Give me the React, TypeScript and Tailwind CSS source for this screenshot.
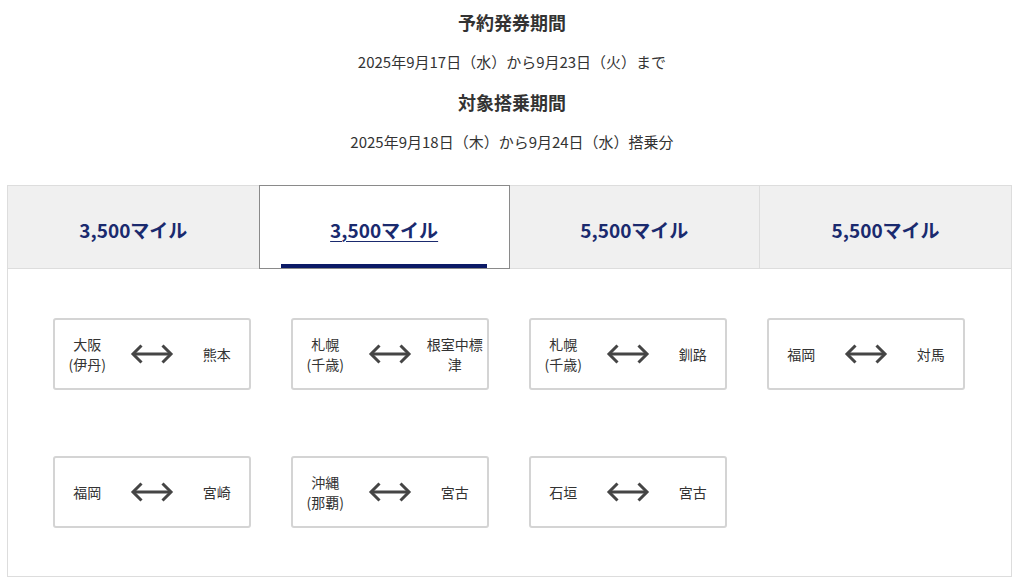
import React from "react";

const routes: [string[], string[]][] = [
  [["大阪", "(伊丹)"], ["熊本"]],
  [["札幌", "(千歳)"], ["根室中標津"]],
  [["札幌", "(千歳)"], ["釧路"]],
  [["福岡"], ["対馬"]],
  [["福岡"], ["宮崎"]],
  [["沖縄", "(那覇)"], ["宮古"]],
  [["石垣"], ["宮古"]],
];

function Arrow() {
  return (
    <svg width="44" height="22" viewBox="0 0 44 22" fill="none">
      <path d="M3 11H41" stroke="#454545" strokeWidth="3" />
      <path d="M11.5 2.5L3 11L11.5 19.5" stroke="#454545" strokeWidth="3" strokeLinejoin="miter" />
      <path d="M32.5 2.5L41 11L32.5 19.5" stroke="#454545" strokeWidth="3" strokeLinejoin="miter" />
    </svg>
  );
}

function Card({ from, to }: { from: string[]; to: string[] }) {
  return (
    <div className="h-[72px] border-2 border-[#d4d4d4] rounded-[3px] grid grid-cols-3 items-center bg-white">
      <div className="px-[3px] text-center text-[14px] leading-5 text-[#333]">
        {from.map((t, i) => (
          <div key={i}>{t}</div>
        ))}
      </div>
      <div className="flex justify-center">
        <Arrow />
      </div>
      <div className="px-[3px] text-center text-[14px] leading-5 text-[#333]">
        {to.map((t, i) => (
          <div key={i}>{t}</div>
        ))}
      </div>
    </div>
  );
}

export default function App() {
  return (
    <div
      className="w-[1024px] h-[587px] bg-white overflow-hidden"
      style={{ fontFamily: '"Noto Sans CJK JP", "Noto Sans", sans-serif' }}
    >
      <div className="pt-[2px] text-[#333] text-center">
        <div className="h-10 flex items-center justify-center text-[18px] font-bold">予約発券期間</div>
        <div className="h-10 flex items-center justify-center text-[15px]">2025年9月17日（水）から9月23日（火）まで</div>
        <div className="h-10 flex items-center justify-center text-[18px] font-bold">対象搭乗期間</div>
        <div className="h-10 flex items-center justify-center text-[15px]">2025年9月18日（木）から9月24日（水）搭乗分</div>
      </div>
      <div className="ml-[7px] mt-[23px] w-[1005px] border border-[#dddddd]">
        <div className="grid grid-cols-4 h-[83px]">
          <div className="bg-[#f0f0f0] border-b border-[#dddddd] flex items-center justify-center pt-[6px]">
            <span className="text-[19px] font-bold text-[#1a2a6e]">3,500マイル</span>
          </div>
          <div className="relative bg-white border border-[#8a8a8a] -mt-px flex items-center justify-center pt-[6px]">
            <span className="text-[19px] font-bold text-[#1a2a6e] underline underline-offset-[3px] decoration-1">3,500マイル</span>
            <div className="absolute left-[21px] right-[22px] bottom-0 h-[4px] bg-[#0b1a66]" />
          </div>
          <div className="bg-[#f0f0f0] border-b border-r border-[#dddddd] flex items-center justify-center pt-[6px]">
            <span className="text-[19px] font-bold text-[#1a2a6e]">5,500マイル</span>
          </div>
          <div className="bg-[#f0f0f0] border-b border-[#dddddd] flex items-center justify-center pt-[6px]">
            <span className="text-[19px] font-bold text-[#1a2a6e]">5,500マイル</span>
          </div>
        </div>
        <div className="pl-[45px] pt-[49px] pb-[48px]">
          <div className="grid grid-cols-[repeat(4,198px)] gap-x-[40px] gap-y-[66px]">
            {routes.map(([f, t], i) => (
              <Card key={i} from={f} to={t} />
            ))}
          </div>
        </div>
      </div>
    </div>
  );
}
